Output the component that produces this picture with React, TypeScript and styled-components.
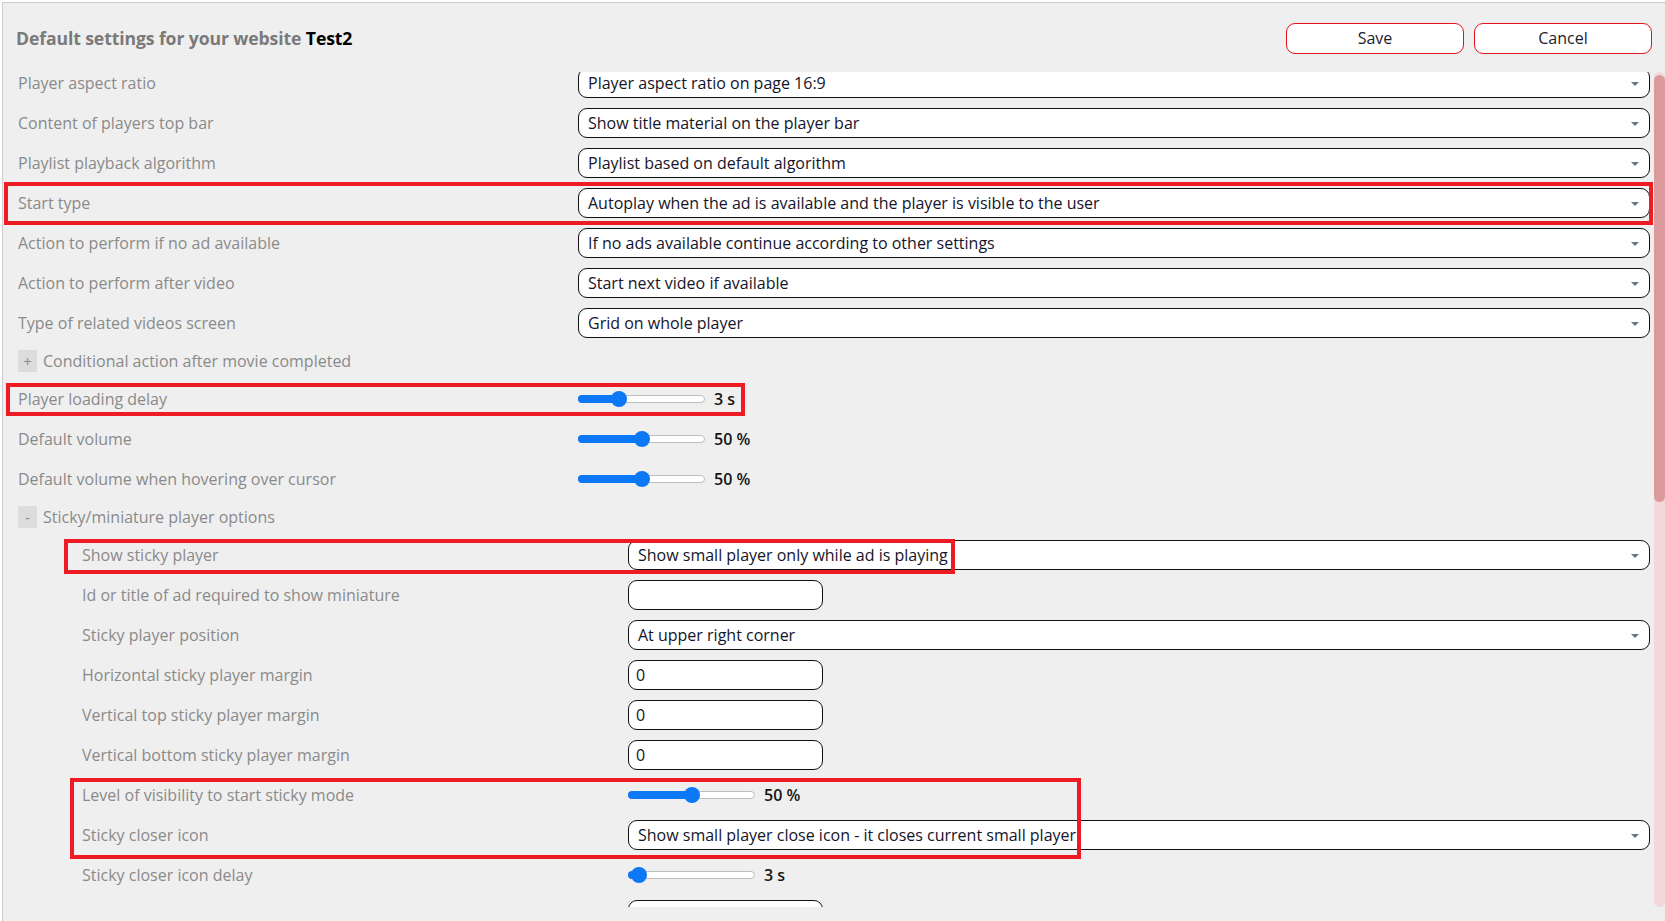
import React from "react";
import styled, { createGlobalStyle } from "styled-components";

const GlobalStyle = createGlobalStyle`
  html, body {
    margin: 0;
    padding: 0;
    background: #ffffff;
    height: 100%;
    overflow: hidden;
  }
  body {
    font-family: "Open Sans", "Noto Sans", "Liberation Sans", sans-serif;
  }
`;

type Mark = { l: number; t: number; w: number; h: number };

type Setting =
  | { kind: "select"; label: string; value: string; mark?: Mark }
  | { kind: "input"; label: string; value: string }
  | { kind: "slider"; label: string; fraction: number; text: string; mark?: Mark }
  | { kind: "group"; label: string; open: boolean };

const mainSettings: Setting[] = [
  { kind: "select", label: "Player aspect ratio", value: "Player aspect ratio on page 16:9" },
  { kind: "select", label: "Content of players top bar", value: "Show title material on the player bar" },
  { kind: "select", label: "Playlist playback algorithm", value: "Playlist based on default algorithm" },
  {
    kind: "select",
    label: "Start type",
    value: "Autoplay when the ad is available and the player is visible to the user",
    mark: { l: -14, t: -6, w: 1649, h: 43 },
  },
  { kind: "select", label: "Action to perform if no ad available", value: "If no ads available continue according to other settings" },
  { kind: "select", label: "Action to perform after video", value: "Start next video if available" },
  { kind: "select", label: "Type of related videos screen", value: "Grid on whole player" },
  { kind: "group", label: "Conditional action after movie completed", open: false },
  { kind: "slider", label: "Player loading delay", fraction: 0.3, text: "3 s", mark: { l: -12, t: -1, w: 739, h: 33 } },
  { kind: "slider", label: "Default volume", fraction: 0.5, text: "50 %" },
  { kind: "slider", label: "Default volume when hovering over cursor", fraction: 0.5, text: "50 %" },
  { kind: "group", label: "Sticky/miniature player options", open: true },
];

const stickySettings: Setting[] = [
  {
    kind: "select",
    label: "Show sticky player",
    value: "Show small player only while ad is playing",
    mark: { l: -18, t: -1, w: 891, h: 35 },
  },
  { kind: "input", label: "Id or title of ad required to show miniature", value: "" },
  { kind: "select", label: "Sticky player position", value: "At upper right corner" },
  { kind: "input", label: "Horizontal sticky player margin", value: "0" },
  { kind: "input", label: "Vertical top sticky player margin", value: "0" },
  { kind: "input", label: "Vertical bottom sticky player margin", value: "0" },
  {
    kind: "slider",
    label: "Level of visibility to start sticky mode",
    fraction: 0.5,
    text: "50 %",
    mark: { l: -12, t: -2, w: 1011, h: 81 },
  },
  { kind: "select", label: "Sticky closer icon", value: "Show small player close icon - it closes current small player" },
  { kind: "slider", label: "Sticky closer icon delay", fraction: 0.03, text: "3 s" },
  { kind: "input", label: "Sticky player width", value: "400" },
  { kind: "select", label: "Sticky player on mobile devices", value: "Show small player at the bottom of the screen" },
  { kind: "input", label: "Mobile sticky player width", value: "100" },
  { kind: "select", label: "Sticky player animation", value: "Slide in from the side" },
];

// the rest of the form, below the visible part of the scroll area
const moreSettings: Setting[] = [
  { kind: "group", label: "Advertising options", open: true },
  { kind: "select", label: "Ad display mode", value: "Display ads before the video" },
  { kind: "input", label: "Maximum number of ads in one break", value: "2" },
  { kind: "slider", label: "Ad volume", fraction: 0.5, text: "50 %" },
  { kind: "select", label: "Skip button", value: "Show skip button after delay" },
  { kind: "slider", label: "Skip button delay", fraction: 0.5, text: "5 s" },
  { kind: "select", label: "Mid-roll frequency", value: "Every 5 minutes" },
  { kind: "select", label: "Post-roll", value: "Show post-roll when available" },
  { kind: "select", label: "Companion ads", value: "Do not show companion ads" },
  { kind: "input", label: "Ad timeout", value: "8" },
  { kind: "select", label: "Player language", value: "Use browser language" },
  { kind: "select", label: "Player skin", value: "Default skin" },
  { kind: "select", label: "Logo position", value: "At lower right corner" },
  { kind: "select", label: "Subtitles", value: "Show subtitles when available" },
];

const Frame = styled.div`
  margin: 2px 0 0 2px;
  height: calc(100vh - 2px);
  box-sizing: border-box;
  border-top: 1px solid #cdcdcd;
  border-left: 1px solid #cdcdcd;
  background: #efefef;
  display: flex;
  flex-direction: column;
  padding-bottom: 14px;
`;

const Header = styled.div`
  flex: 0 0 69px;
  display: flex;
  align-items: center;
  justify-content: space-between;
  padding: 0 13px 0 13px;
`;

const Title = styled.h1`
  margin: 0;
  font-size: 17.6px;
  font-weight: 700;
  color: #7a7a7a;
  letter-spacing: -0.1px;
`;

const TitleName = styled.span`
  color: #000;
`;

const Actions = styled.div`
  display: flex;
  gap: 10px;
  padding-top: 1px;
`;

const ActionButton = styled.button`
  width: 178px;
  height: 31px;
  box-sizing: border-box;
  border: 1px solid #e3141b;
  border-radius: 9px;
  background: #fff;
  font-family: inherit;
  font-size: 16px;
  color: #1c1c2c;
  cursor: pointer;
`;

const ScrollArea = styled.div`
  flex: 1;
  min-height: 0;
  display: flex;
`;

const Scroller = styled.div`
  flex: 1;
  overflow: hidden;
`;

const ScrollTrack = styled.div`
  flex: 0 0 11px;
  display: flex;
  flex-direction: column;
  background: #f2d8d9;
  border-radius: 6px;
`;

const ScrollThumb = styled.div`
  height: 427px;
  margin-top: 3px;
  background: #dc9a9d;
  border-radius: 6px;
`;

const List = styled.div`
  margin-top: -4px;
  padding: 0 4px 16px 15px;
`;

const Nested = styled.div`
  padding-left: 64px;
`;

const Row = styled.div<{ $labelWidth: number }>`
  position: relative;
  display: grid;
  grid-template-columns: ${(p) => p.$labelWidth}px 1fr;
  align-items: center;
  height: 30px;
  margin-bottom: 10px;
`;

const Label = styled.div`
  font-size: 16px;
  color: #8a8a8a;
  white-space: nowrap;
`;

const SelectBox = styled.div`
  position: relative;
  height: 30px;
  box-sizing: border-box;
  border: 1px solid #111;
  border-radius: 9px;
  background: #fff;
  display: flex;
  align-items: center;
  padding: 0 30px 0 9px;
  font-size: 16px;
  color: #14142a;
  white-space: nowrap;
`;

const Caret = styled.span`
  position: absolute;
  right: 10px;
  top: 13px;
  width: 0;
  height: 0;
  border-left: 4px solid transparent;
  border-right: 4px solid transparent;
  border-top: 4px solid #6b7684;
`;

const TextInput = styled.input`
  width: 195px;
  height: 30px;
  box-sizing: border-box;
  border: 1px solid #111;
  border-radius: 9px;
  background: #fff;
  padding: 0 7px;
  font-family: inherit;
  font-size: 16px;
  color: #14142a;
  outline: none;
`;

const SliderWrap = styled.div`
  display: flex;
  align-items: center;
  gap: 9px;
`;

const SliderTrack = styled.div`
  position: relative;
  width: 127px;
  height: 8px;
  box-sizing: border-box;
  border: 1px solid #bdbdbd;
  border-radius: 4px;
  background: #fff;
`;

const SliderFill = styled.div`
  position: absolute;
  left: -1px;
  top: -1px;
  bottom: -1px;
  border-radius: 4px;
  background: #0c78f6;
`;

const SliderThumb = styled.div`
  position: absolute;
  top: 50%;
  width: 16px;
  height: 16px;
  margin: -8px 0 0 -8px;
  border-radius: 50%;
  background: #0c78f6;
`;

const SliderValue = styled.span`
  font-size: 16px;
  font-weight: 600;
  color: #151515;
`;

const GroupRow = styled.div`
  display: flex;
  align-items: center;
  gap: 6px;
  height: 26px;
  margin-bottom: 10px;
`;

const Toggle = styled.span`
  width: 19px;
  height: 22px;
  background: #dcdcdc;
  color: #8a8a8a;
  font-size: 15px;
  display: flex;
  align-items: center;
  justify-content: center;
`;

const Highlight = styled.div<{ $l: number; $t: number; $w: number; $h: number }>`
  position: absolute;
  left: ${(p) => p.$l}px;
  top: ${(p) => p.$t}px;
  width: ${(p) => p.$w}px;
  height: ${(p) => p.$h}px;
  box-sizing: border-box;
  border: 4px solid #ed1c24;
  pointer-events: none;
  z-index: 2;
`;

function Slider({ fraction, text }: { fraction: number; text: string }) {
  const pos = 8 + fraction * 111;
  return (
    <SliderWrap>
      <SliderTrack>
        <SliderFill style={{ width: pos + 1 }} />
        <SliderThumb style={{ left: pos - 1 }} />
      </SliderTrack>
      <SliderValue>{text}</SliderValue>
    </SliderWrap>
  );
}

function SettingRow({ item, labelWidth }: { item: Setting; labelWidth: number }) {
  if (item.kind === "group") {
    return (
      <GroupRow>
        <Toggle>{item.open ? "-" : "+"}</Toggle>
        <Label>{item.label}</Label>
      </GroupRow>
    );
  }

  const mark = "mark" in item ? item.mark : undefined;

  return (
    <Row $labelWidth={labelWidth}>
      <Label>{item.label}</Label>
      {item.kind === "select" && (
        <SelectBox>
          {item.value}
          <Caret />
        </SelectBox>
      )}
      {item.kind === "input" && <TextInput readOnly value={item.value} />}
      {item.kind === "slider" && <Slider fraction={item.fraction} text={item.text} />}
      {mark && <Highlight $l={mark.l} $t={mark.t} $w={mark.w} $h={mark.h} />}
    </Row>
  );
}

export default function App() {
  return (
    <>
      <GlobalStyle />
      <Frame>
        <Header>
          <Title>
            Default settings for your website <TitleName>Test2</TitleName>
          </Title>
          <Actions>
            <ActionButton>Save</ActionButton>
            <ActionButton>Cancel</ActionButton>
          </Actions>
        </Header>

        <ScrollArea>
          <Scroller>
            <List>
              {mainSettings.map((item) => (
                <SettingRow key={item.label} item={item} labelWidth={560} />
              ))}
              <Nested>
                {stickySettings.map((item) => (
                  <SettingRow key={item.label} item={item} labelWidth={546} />
                ))}
              </Nested>
              {moreSettings.map((item) => (
                <SettingRow key={item.label} item={item} labelWidth={560} />
              ))}
            </List>
          </Scroller>
          <ScrollTrack>
            <ScrollThumb />
          </ScrollTrack>
        </ScrollArea>
      </Frame>
    </>
  );
}
